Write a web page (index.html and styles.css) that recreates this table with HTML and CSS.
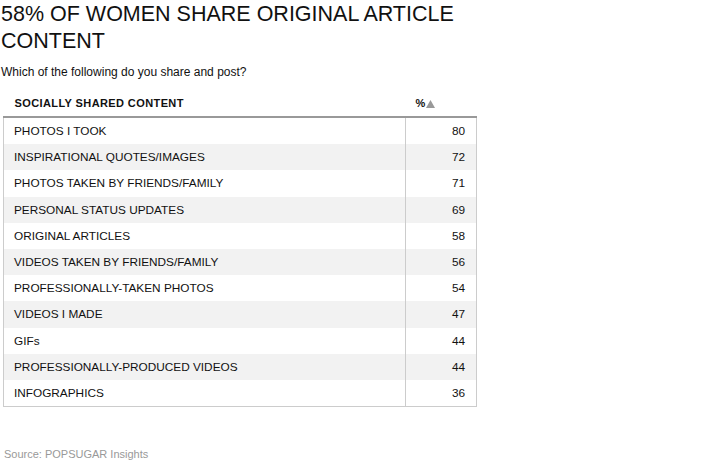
FILE: index.html
```html
<!DOCTYPE html>
<html>
<head>
<meta charset="utf-8">
<link rel="stylesheet" href="styles.css">
</head>
<body>
<div class="page">
  <h1 class="title">58% OF WOMEN SHARE ORIGINAL ARTICLE CONTENT</h1>
  <p class="subtitle">Which of the following do you share and post?</p>
  <table class="data">
    <thead>
      <tr>
        <th class="col-label">SOCIALLY SHARED CONTENT</th>
        <th class="col-value">%<svg class="sort" width="9" height="8" viewBox="0 0 9 8"><polygon points="4.5,0 9,8 0,8" fill="#999"/></svg></th>
      </tr>
    </thead>
    <tbody>
      <tr><td class="label">PHOTOS I TOOK</td><td class="value">80</td></tr>
      <tr><td class="label">INSPIRATIONAL QUOTES/IMAGES</td><td class="value">72</td></tr>
      <tr><td class="label">PHOTOS TAKEN BY FRIENDS/FAMILY</td><td class="value">71</td></tr>
      <tr><td class="label">PERSONAL STATUS UPDATES</td><td class="value">69</td></tr>
      <tr><td class="label">ORIGINAL ARTICLES</td><td class="value">58</td></tr>
      <tr><td class="label">VIDEOS TAKEN BY FRIENDS/FAMILY</td><td class="value">56</td></tr>
      <tr><td class="label">PROFESSIONALLY-TAKEN PHOTOS</td><td class="value">54</td></tr>
      <tr><td class="label">VIDEOS I MADE</td><td class="value">47</td></tr>
      <tr><td class="label">GIFs</td><td class="value">44</td></tr>
      <tr><td class="label">PROFESSIONALLY-PRODUCED VIDEOS</td><td class="value">44</td></tr>
      <tr><td class="label">INFOGRAPHICS</td><td class="value">36</td></tr>
    </tbody>
  </table>
  <p class="source">Source: POPSUGAR Insights</p>
</div>
</body>
</html>
```
FILE: styles.css
```css
html, body {
  margin: 0;
  padding: 0;
  background: #fff;
}
.page {
  font-family: "Liberation Sans", Arial, sans-serif;
  color: #111;
  padding: 0 0 0 1px;
}
.title {
  margin: 0;
  padding-top: 1px;
  font-size: 21.5px;
  font-weight: normal;
  line-height: 27px;
  width: 460px;
}
.subtitle {
  margin: 9px 0 0 0;
  font-size: 12px;
  line-height: 16px;
}
.data {
  margin: 10px 0 0 2px;
  width: 474px;
  border-collapse: collapse;
  font-size: 11.8px;
}
.data th {
  font-size: 11px;
  font-weight: bold;
  text-align: left;
  height: 26px;
  padding: 0 0 0 11px;
  border-bottom: 2px solid #999;
  letter-spacing: 0.4px;
  white-space: nowrap;
}
.data th.col-value {
  padding-left: 10px;
  letter-spacing: 0;
}
.sort {
  margin-left: 1px;
  vertical-align: -1px;
}
.data td {
  height: 26.2px;
  padding: 0;
  border-left: 1px solid #ccc;
  border-right: 1px solid #ccc;
}
.data tbody tr:last-child td {
  border-bottom: 1px solid #ccc;
}
.data tbody tr:nth-child(even) td {
  background: #f2f2f2;
}
.data td.label {
  padding-left: 10px;
}
.data td.value {
  width: 59px;
  text-align: right;
  padding-right: 11px;
}
.source {
  margin: 41px 0 0 3px;
  font-size: 11px;
  color: #999;
}
```
